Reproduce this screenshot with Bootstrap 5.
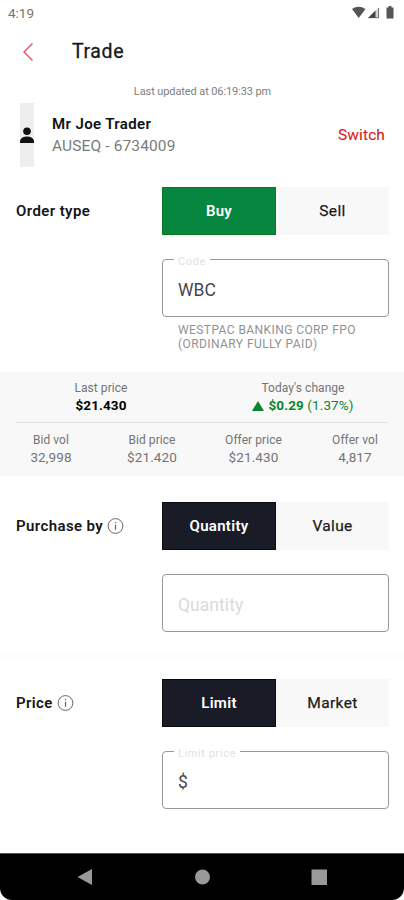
<!DOCTYPE html>
<html lang="en">
<head>
<meta charset="utf-8">
<meta name="viewport" content="width=device-width, initial-scale=1">
<title>Trade</title>
<link href="https://cdn.jsdelivr.net/npm/bootstrap@5.3.0/dist/css/bootstrap.min.css" rel="stylesheet">
<style>
body{font-family:Roboto,"Liberation Sans",sans-serif;background:#fff;color:#1a1a1d}
.phone{width:404px;height:900px;overflow:hidden}
svg{display:block;flex:none}
.t{white-space:nowrap}
.status{height:26px;padding:0 6px 0 8px;color:#747474;font-size:13.5px}
.appbar{height:52px;padding-left:22px}
.appbar h1{font-size:19.5px;font-weight:400;-webkit-text-stroke:.3px;letter-spacing:.6px;margin:0 0 0 37px;line-height:24px}
.updated{height:25px;line-height:28px;font-size:11px;color:#808080;letter-spacing:-.1px;text-indent:1px}
.account{height:64px;padding:0 19px 0 20px}
.avatar{width:14px;height:64px;background:#eee}
.who{margin-left:18px;font-size:15px;line-height:21px}
.who .name{font-weight:600;color:#111;letter-spacing:.38px}
.who .num{color:#7b7b7b;letter-spacing:.12px;font-size:15.5px;line-height:22px}
.switch{font-size:15.5px;-webkit-text-stroke:.1px;color:#d91a20;letter-spacing:.1px;padding-top:1px}
.orow{padding:0 15px 0 16px;height:48px;margin-top:20px}
.orow.spaced{margin-top:26px}
.olabel{width:146px;font-size:15px;font-weight:600;letter-spacing:.4px;color:#151518}
.seg{width:227px;height:48px}
.seg .btn{border-radius:0;border:0;padding:0;font-size:15.5px;font-weight:400;-webkit-text-stroke:.25px;letter-spacing:.35px;line-height:49px;height:48px;color:#1b1b1b;background:#f8f8f8}
.seg .btn.buy,.seg .btn.dark{color:#fff;line-height:47px;font-size:15px;font-weight:600;-webkit-text-stroke:0;letter-spacing:.3px}
.seg .btn.buy{background:#078640;border:1px solid #087a22}
.seg .btn.dark{background:#191b27;border:1px solid #0a0a0f}
.seg .btn:first-child{flex:0 0 114px}
.field{width:227px;height:58px;margin:24px 15px 0 auto;border:1px solid #999;border-radius:4px;padding:4px 15px 0;font-size:17.5px;position:relative;color:#48484a}
.field .cap{position:absolute;top:-6px;left:11px;padding:0 4px;background:#fff;font-size:11px;line-height:16px;color:#e2e2e2;letter-spacing:.6px}
.ph{color:#dadada;letter-spacing:.05px}
.helper{margin:6px 0 0 178px;height:49px;font-size:12px;line-height:14px;color:#929292;letter-spacing:.42px}
.stats{height:104px;background:#f8f8f8;padding:9px 16px 0;text-align:center;color:#747474;font-size:12px;letter-spacing:.05px}
.stats .top{height:42px;border-bottom:1px solid #e2e2e2}
.stats .l{line-height:15px}
.stats .v{font-size:13.5px;line-height:19px;letter-spacing:.1px}
.stats .low{padding-top:10px}
.q1{flex:0 0 70px}.q2{flex:0 0 132px}.q3{flex:0 0 71px}
.green{color:#08862b}
.sep{height:7px;background:#fcfcfc;margin-top:20px}
.navb{height:47px;background:#000;border-radius:0 0 12px 12px;border-top:1px solid #555}
</style>
</head>
<body>
<main class="phone d-flex flex-column">
  <div class="status d-flex align-items-center justify-content-between">
    <span class="t">4:19</span>
    <svg width="49" height="14" viewBox="0 0 49 14"><path d="M3 3Q9.500-1.500 16.500 3L9.700 12Z" fill="#555"/><path d="M30 1V12H19Z" fill="#d5d5d5"/><path d="M26.500 4.500V12H19Z" fill="#444"/><path d="M29.600 2V11.700H19.500" fill="none" stroke="#555" stroke-width=".8"/><path d="M39.500 1.500V0h3v1.500h2V12.500h-7V1.500Z" fill="#555"/></svg>
  </div>
  <header class="appbar d-flex align-items-center">
    <svg width="13" height="20" viewBox="0 0 13 20"><path d="M10.500 1.500 2 10l8.500 8.500" fill="none" stroke="#e0606a" stroke-width="1.500"/></svg>
    <h1 class="t">Trade</h1>
  </header>
  <div class="updated text-center t">Last updated at 06:19:33 pm</div>
  <section class="account d-flex align-items-center">
    <div class="avatar d-flex align-items-center justify-content-center">
      <svg width="14" height="17" viewBox="0 0 14 17"><circle cx="7" cy="4.300" r="3.800" fill="#111"/><path d="M0 16V13.500Q1.500 9.600 7 9.600T14 13.500V16Z" fill="#111"/></svg>
    </div>
    <div class="who t"><div class="name">Mr Joe Trader</div><div class="num">AUSEQ - 6734009</div></div>
    <div class="switch ms-auto">Switch</div>
  </section>

  <section class="orow d-flex align-items-center">
    <div class="olabel">Order type</div>
    <div class="seg d-flex"><button class="btn buy">Buy</button><button class="btn flex-fill">Sell</button></div>
  </section>
  <div class="field d-flex align-items-center"><span class="cap">Code</span><span class="t">WBC</span></div>
  <div class="helper t">WESTPAC BANKING CORP FPO<br>(ORDINARY FULLY PAID)</div>

  <section class="stats">
    <div class="top d-flex">
      <div class="w-50 pe-3 ps-0"><div class="l">Last price</div><div class="v fw-bold text-black">$21.430</div></div>
      <div class="w-50 ps-3"><div class="l">Today's change</div>
        <div class="v green d-flex align-items-center justify-content-center"><svg class="me-1" width="12" height="10" viewBox="0 0 12 10"><path d="M6 0 12 10H0Z" fill="#08862b"/></svg><span><b>$0.29</b> (1.37%)</span></div></div>
    </div>
    <div class="low d-flex t">
      <div class="q1"><div class="l">Bid vol</div><div class="v">32,998</div></div>
      <div class="q2"><div class="l">Bid price</div><div class="v">$21.420</div></div>
      <div class="q3"><div class="l">Offer price</div><div class="v">$21.430</div></div>
      <div class="q2"><div class="l">Offer vol</div><div class="v">4,817</div></div>
    </div>
  </section>

  <section class="orow spaced d-flex align-items-center">
    <div class="olabel d-flex align-items-center"><span class="t">Purchase by</span><svg class="ms-1" width="17" height="17" viewBox="0 0 17 17"><circle cx="8.500" cy="8" r="7.400" fill="none" stroke="#666"/><path d="M8.500 6.800v5M8.500 4v1.300" stroke="#666" stroke-width="1.200"/></svg></div>
    <div class="seg d-flex"><button class="btn dark">Quantity</button><button class="btn flex-fill">Value</button></div>
  </section>
  <div class="field d-flex align-items-center"><span class="ph">Quantity</span></div>
  <div class="sep"></div>

  <section class="orow d-flex align-items-center">
    <div class="olabel d-flex align-items-center"><span class="t">Price</span><svg class="ms-1" width="17" height="17" viewBox="0 0 17 17"><circle cx="8.500" cy="8" r="7.400" fill="none" stroke="#666"/><path d="M8.500 6.800v5M8.500 4v1.300" stroke="#666" stroke-width="1.200"/></svg></div>
    <div class="seg d-flex"><button class="btn dark">Limit</button><button class="btn flex-fill">Market</button></div>
  </section>
  <div class="field d-flex align-items-center"><span class="cap t">Limit price</span><span>$</span></div>

  <nav class="navb mt-auto d-flex align-items-center">
    <svg width="404" height="46" viewBox="0 0 404 46"><path d="M77.500 23 92 15V31Z" fill="#999"/><circle cx="202.500" cy="23" r="7.500" fill="#999"/><path d="M311.500 15.500H327V31H311.500Z" fill="#999"/></svg>
  </nav>
</main>
<script src="https://cdn.jsdelivr.net/npm/bootstrap@5.3.0/dist/js/bootstrap.bundle.min.js"></script>
</body>
</html>
